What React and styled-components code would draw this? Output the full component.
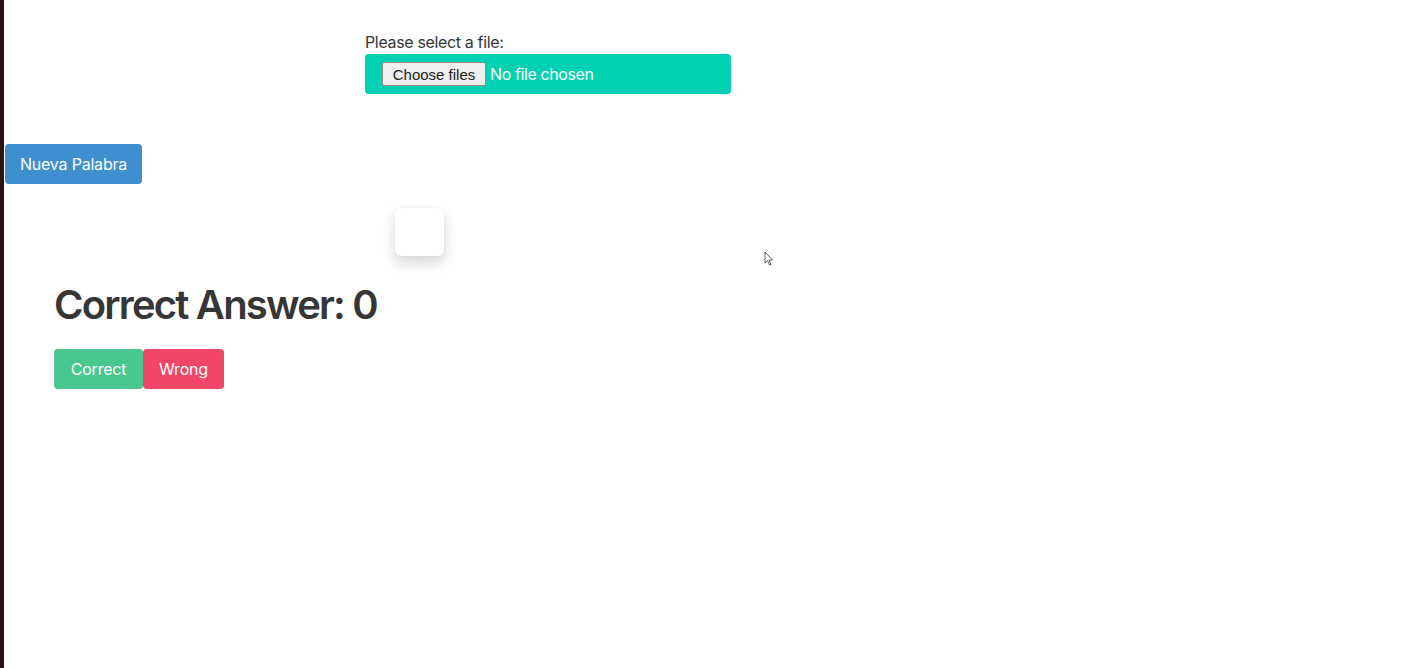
import React from "react";
import styled, { createGlobalStyle } from "styled-components";

const GlobalStyle = createGlobalStyle`
  html, body {
    margin: 0;
    padding: 0;
    background: #2b1212;
  }
  body {
    font-family: Inter, "Noto Sans", "Liberation Sans", sans-serif;
    font-size: 16px;
    color: #4a4a4a;
  }
`;

const Page = styled.div`
  position: relative;
  margin-left: 4px;
  min-height: 100vh;
  background: #fff;
  overflow: hidden;
`;

const UploadSection = styled.div`
  padding: 30px 0 0 361px;
`;

const Label = styled.label`
  display: block;
  font-size: 16px;
  line-height: 24px;
  letter-spacing: -0.35px;
  color: #363636;
`;

const FileField = styled.div`
  display: flex;
  align-items: center;
  width: 366px;
  height: 40px;
  box-sizing: border-box;
  padding-left: 17px;
  background: #00d1b2;
  border-radius: 4px;
  box-shadow: 0 0 1px rgba(0, 209, 178, 0.4);
`;

const ChooseButton = styled.span`
  display: inline-flex;
  align-items: center;
  justify-content: center;
  width: 104px;
  height: 24px;
  box-sizing: border-box;
  background: #efefef;
  border: 1px solid #8a8a8a;
  border-radius: 2px;
  font-family: "Liberation Sans", Arial, sans-serif;
  font-size: 15px;
  color: #222;
`;

const FileName = styled.span`
  margin-left: 4px;
  font-size: 16px;
  letter-spacing: -0.4px;
  color: #fff;
`;

const Button = styled.button`
  display: inline-flex;
  align-items: center;
  justify-content: center;
  height: 40px;
  box-sizing: border-box;
  padding: 0 16px;
  border: 1px solid transparent;
  border-radius: 4px;
  font-family: inherit;
  font-size: 16px;
  letter-spacing: -0.2px;
  white-space: nowrap;
  color: #fff;
  background: ${(p) => p.$bg};
  cursor: pointer;
`;

const NewWordButton = styled(Button)`
  margin: 50px 0 0 1px;
  width: 137px;
`;

const Card = styled.div`
  width: 49px;
  height: 48px;
  margin: 24px 0 0 391px;
  background: #fff;
  border-radius: 6px;
  box-shadow: 0 8px 16px -2px rgba(10, 10, 10, 0.1),
    0 6px 10px 4px rgba(10, 10, 10, 0.05), 0 0 0 1px rgba(10, 10, 10, 0.02);
`;

const Results = styled.div`
  padding-left: 50px;
`;

const Title = styled.h1`
  margin: 26px 0 0;
  font-size: 40px;
  font-weight: 600;
  line-height: 45px;
  color: #363636;
  letter-spacing: -1.8px;
`;

const Actions = styled.div`
  display: flex;
  margin-top: 22px;
`;

const Cursor = styled.svg`
  position: absolute;
  left: 760px;
  top: 251px;
`;

export default function App() {
  return (
    <>
      <GlobalStyle />
      <Page>
        <UploadSection>
          <Label>Please select a file:</Label>
          <FileField>
            <ChooseButton>Choose files</ChooseButton>
            <FileName>No file chosen</FileName>
          </FileField>
        </UploadSection>
        <NewWordButton $bg="#3e8ed0">Nueva Palabra</NewWordButton>
        <Card />
        <Results>
          <Title>Correct Answer: 0</Title>
          <Actions>
            <Button $bg="#48c78e" style={{ width: 89 }}>Correct</Button>
            <Button $bg="#f14668" style={{ width: 81 }}>Wrong</Button>
          </Actions>
        </Results>
        <Cursor width="10" height="16" viewBox="0 0 10 16">
          <path d="M1 1 L1 12 L3.5 9.5 L5.5 14 L7 13.3 L5 9 L8.5 9 Z" fill="#fff" stroke="#333" strokeWidth="0.8" />
        </Cursor>
      </Page>
    </>
  );
}
